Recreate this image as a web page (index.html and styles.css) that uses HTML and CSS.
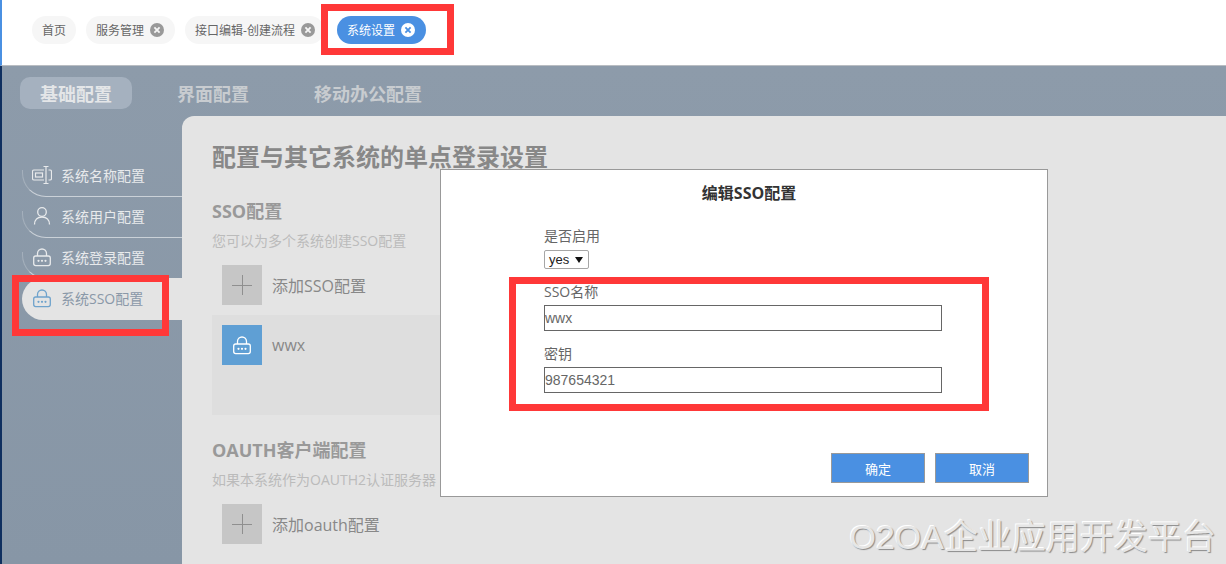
FILE: index.html
```html
<!DOCTYPE html>
<html lang="zh-CN">
<head>
    <meta charset="UTF-8">
    <title>系统设置</title>
    <link rel="stylesheet" href="styles.css">
</head>
<body>

    <svg class="defs" width="0" height="0">
        <symbol id="lock" viewBox="0 0 20 20">
            <path d="M5.500 9V6.500a4.500 4.500 0 0 1 9 0V9" fill="none" stroke="currentColor" stroke-width="1.300"/>
            <rect x="1.700" y="9" width="16.600" height="9.600" rx="2" fill="none" stroke="currentColor" stroke-width="1.300"/>
            <circle cx="6.500" cy="13.800" r="1.100" fill="currentColor"/>
            <circle cx="10" cy="13.800" r="1.100" fill="currentColor"/>
            <circle cx="13.500" cy="13.800" r="1.100" fill="currentColor"/>
        </symbol>
        <symbol id="close" viewBox="0 0 14 14">
            <circle cx="7" cy="7" r="7" fill="currentColor"/>
            <path d="M4.400 4.400l5.200 5.200M9.600 4.400l-5.200 5.200" stroke="var(--x)" stroke-width="1.800"/>
        </symbol>
    </svg>

    <header class="topbar">
        <div class="tab home">首页</div>
        <div class="tab">服务管理<svg class="tab-x"><use href="#close"/></svg></div>
        <div class="tab long">接口编辑-创建流程<svg class="tab-x"><use href="#close"/></svg></div>
        <div class="tab active">系统设置<svg class="tab-x"><use href="#close"/></svg></div>
    </header>

    <div class="main">
        <nav class="subnav">
            <div class="subnav-item current">基础配置</div>
            <div class="subnav-item">界面配置</div>
            <div class="subnav-item">移动办公配置</div>
        </nav>

        <div class="body-row">
            <aside class="sidebar">
                <div class="side-item">
                    <svg class="side-icon" viewBox="0 0 20 20">
                        <path d="M12 5H2a1.500 1.500 0 0 0-1.500 1.500v7A1.500 1.500 0 0 0 2 15h10M16.500 5H18a1.500 1.500 0 0 1 1.500 1.500v7A1.500 1.500 0 0 1 18 15h-1.500" fill="none" stroke="currentColor" stroke-width="1.200"/>
                        <rect x="3.500" y="8" width="7" height="4" fill="none" stroke="currentColor" stroke-width="1.200"/>
                        <path d="M11.500 1.500h5M11.500 18.500h5M14 1.500v17" fill="none" stroke="currentColor" stroke-width="1.200"/>
                    </svg>
                    系统名称配置
                </div>
                <div class="side-item">
                    <svg class="side-icon" viewBox="0 0 20 20">
                        <circle cx="10" cy="6" r="4.300" fill="none" stroke="currentColor" stroke-width="1.300"/>
                        <path d="M2.500 18.500c0-4.500 3-7.500 7.500-7.500s7.500 3 7.500 7.500" fill="none" stroke="currentColor" stroke-width="1.300"/>
                    </svg>
                    系统用户配置
                </div>
                <div class="side-item">
                    <svg class="side-icon"><use href="#lock"/></svg>
                    系统登录配置
                </div>
                <div class="side-item selected">
                    <svg class="side-icon"><use href="#lock"/></svg>
                    系统SSO配置
                </div>
            </aside>

            <section class="panel">
                <h1 class="panel-title">配置与其它系统的单点登录设置</h1>

                <h2 class="group-title">SSO配置</h2>
                <p class="group-desc">您可以为多个系统创建SSO配置</p>
                <div class="add-row">
                    <span class="square plus"></span>
                    添加SSO配置
                </div>
                <div class="config-row">
                    <span class="square blue"><svg class="square-icon"><use href="#lock"/></svg></span>
                    wwx
                </div>

                <h2 class="group-title second">OAUTH客户端配置</h2>
                <p class="group-desc">如果本系统作为OAUTH2认证服务器</p>
                <div class="add-row">
                    <span class="square plus"></span>
                    添加oauth配置
                </div>
            </section>
        </div>
    </div>

    <div class="dialog">
        <div class="dialog-title">编辑SSO配置</div>
        <div class="form">
            <label class="field-label">是否启用</label>
            <div class="fake-select">yes<span class="arrow"></span></div>
            <label class="field-label name-label">SSO名称</label>
            <input class="field-input" type="text" value="wwx">
            <label class="field-label key-label">密钥</label>
            <input class="field-input" type="text" value="987654321">
        </div>
        <div class="dialog-buttons">
            <button class="btn">确定</button>
            <button class="btn">取消</button>
        </div>
    </div>

    <div class="mark mark-tab"></div>
    <div class="mark mark-side"></div>
    <div class="mark mark-form"></div>

    <div class="watermark">O2OA企业应用开发平台</div>

</body>
</html>
```

FILE: styles.css
```css
* {
    margin: 0;
    padding: 0;
    box-sizing: border-box;
}

html, body {
    height: 564px;
    overflow: hidden;
}

body {
    position: relative;
    font-family: "Open Sans", "Noto Sans CJK SC", sans-serif;
    background: #8d9baa;
}

.defs {
    position: absolute;
}

/* top tabs */
.topbar {
    display: flex;
    align-items: center;
    gap: 10px;
    height: 66px;
    padding: 0 0 6px 30px;
    background: #fff;
    border-left: 2px solid #4a90e2;
    border-bottom: 1px solid #b9bdc2;
}

.tab {
    display: flex;
    align-items: center;
    height: 28px;
    padding: 0 11px 0 10px;
    border-radius: 14px;
    background: #f6f6f6;
    color: #666;
    font-size: 12px;
}

.tab.home {
    padding-right: 10px;
}

.tab.long {
    padding-right: 9px;
}

.tab-x {
    width: 14px;
    height: 14px;
    margin-left: 6px;
    color: #999;
    --x: #f6f6f6;
}

.tab.active {
    margin-left: 3px;
    background: #4a90e2;
    color: #fff;
}

.tab.active .tab-x {
    color: #fff;
    --x: #4a90e2;
}

/* main area */
.main {
    height: 498px;
    border-left: 2px solid #0f2f5f;
    background: linear-gradient(#8d9baa, #8796a6);
}

.subnav {
    display: flex;
    gap: 25px;
    height: 50px;
    padding: 11px 0 0 18px;
}

.subnav-item {
    height: 32px;
    padding: 0 20px;
    border-radius: 10px;
    color: #c8ccd0;
    font-size: 18px;
    font-weight: bold;
    line-height: 34px;
}

.subnav-item.current {
    background: #a5b1bf;
    color: #e4e6e8;
}

.body-row {
    display: flex;
    height: 448px;
}

/* left menu */
.sidebar {
    width: 180px;
    flex-shrink: 0;
    padding: 40px 0 0 20px;
}

.side-item {
    position: relative;
    display: flex;
    align-items: center;
    height: 41px;
    padding: 0 0 3px 10px;
    color: #e8eaec;
    font-size: 14px;
}

/* thin curved rule under each menu row */
.side-item::before {
    content: "";
    position: absolute;
    left: 0;
    right: 0;
    bottom: 0;
    height: 26px;
    border-left: 1px solid rgba(255, 255, 255, 0.22);
    border-bottom: 1px solid rgba(255, 255, 255, 0.55);
    border-bottom-left-radius: 24px;
}

.side-icon {
    width: 20px;
    height: 20px;
    margin-right: 9px;
    flex-shrink: 0;
}

.side-item.selected {
    height: 42px;
    margin-top: -1px;
    border-radius: 21px 0 0 21px;
    background: #e4e4e4;
    color: #8a98a8;
}

.side-item.selected::before {
    display: none;
}

.side-item.selected .side-icon {
    color: #6fa3cc;
}

/* content panel */
.panel {
    flex: 1;
    padding: 24px 0 0 30px;
    border-top-left-radius: 12px;
    background: #e4e4e4;
}

.panel-title {
    color: #888;
    font-size: 24px;
    font-weight: bold;
    line-height: 34px;
}

.group-title {
    margin-top: 25px;
    color: #999;
    font-size: 18px;
    font-weight: bold;
    line-height: 24px;
}

.group-title.second {
    margin-top: 23px;
}

.group-desc {
    margin-top: 8px;
    color: #bbb;
    font-size: 14px;
    line-height: 20px;
}

.add-row {
    display: flex;
    align-items: center;
    height: 40px;
    margin: 14px 0 0 10px;
    padding-bottom: 1px;
    color: #888;
    font-size: 16px;
}

.config-row {
    display: flex;
    align-items: flex-start;
    width: 600px;
    height: 100px;
    margin-top: 10px;
    padding: 10px;
    background: #dedede;
    color: #888;
    font-size: 16px;
    line-height: 41px;
}

.square {
    position: relative;
    display: flex;
    align-items: center;
    justify-content: center;
    width: 40px;
    height: 40px;
    margin-right: 10px;
    flex-shrink: 0;
}

.add-row .square {
    margin-bottom: -1px;
}

.square.plus {
    background: #c6c6c6;
}

.square.plus::before,
.square.plus::after {
    content: "";
    position: absolute;
    background: #8f8f8f;
}

.square.plus::before {
    width: 20px;
    height: 1px;
}

.square.plus::after {
    width: 1px;
    height: 20px;
}

.square.blue {
    background: #5f9fd4;
    color: #fff;
}

.square-icon {
    width: 20px;
    height: 20px;
}

/* dialog */
.dialog {
    position: absolute;
    left: 440px;
    top: 169px;
    width: 608px;
    height: 328px;
    border: 1px solid #999;
    background: #fff;
}

.dialog-title {
    padding: 12px 0 0 10px;
    color: #333;
    font-size: 16px;
    font-weight: bold;
    line-height: 22px;
    text-align: center;
}

.form {
    display: flex;
    flex-direction: column;
    align-items: flex-start;
    padding: 22px 0 0 103px;
}

.field-label {
    color: #666;
    font-size: 14px;
    line-height: 20px;
}

.fake-select {
    display: flex;
    align-items: center;
    justify-content: space-between;
    width: 45px;
    height: 19px;
    margin-top: 4px;
    padding: 0 5px 0 4px;
    border: 1px solid #a6a6a6;
    border-radius: 2px;
    color: #222;
    font-family: "Liberation Sans", sans-serif;
    font-size: 13px;
}

.arrow {
    width: 0;
    height: 0;
    border-left: 4px solid transparent;
    border-right: 4px solid transparent;
    border-top: 6px solid #111;
}

.name-label {
    margin-top: 13px;
}

.key-label {
    margin-top: 13px;
}

.field-input {
    width: 398px;
    height: 26px;
    margin-top: 3px;
    padding: 0;
    border: 1px solid #666;
    border-radius: 0;
    outline: none;
    color: #666;
    font-family: "Liberation Sans", sans-serif;
    font-size: 14px;
}

.dialog-buttons {
    position: absolute;
    right: 18px;
    bottom: 13px;
    display: flex;
    gap: 10px;
}

.btn {
    width: 94px;
    height: 30px;
    border: 1px solid #999;
    background: #4a90e2;
    color: #fff;
    font-family: inherit;
    font-size: 13px;
}

/* red annotation boxes */
.mark {
    position: absolute;
    border: 7px solid #ff3838;
}

.mark-tab {
    left: 321px;
    top: 4px;
    width: 133px;
    height: 51px;
}

.mark-side {
    left: 12px;
    top: 275px;
    width: 157px;
    height: 61px;
}

.mark-form {
    left: 509px;
    top: 277px;
    width: 480px;
    height: 134px;
}

.watermark {
    position: absolute;
    right: 10px;
    bottom: 6px;
    color: #e6e6e6;
    font-family: "Liberation Sans", "Noto Sans CJK SC", sans-serif;
    font-size: 34px;
    line-height: 42px;
    white-space: nowrap;
    text-shadow: 1px 1px 1px #8a8a8a, -1px -1px 0 #fff;
}
```
